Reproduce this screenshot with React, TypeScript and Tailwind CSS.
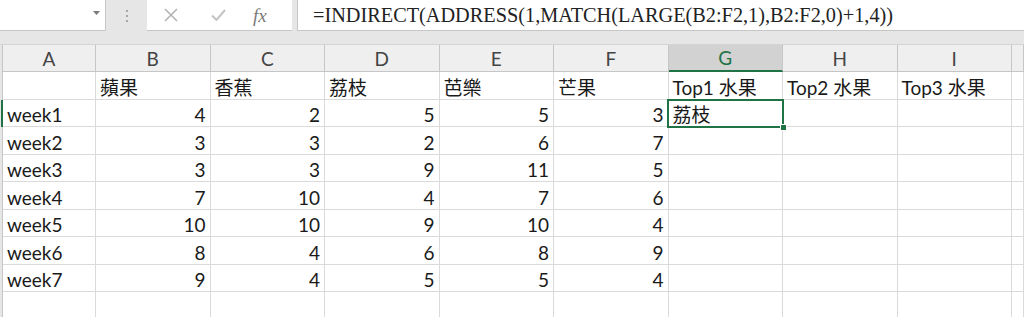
import React from 'react'

// ─── data ────────────────────────────────────────────────────────────
const COLS = ['A', 'B', 'C', 'D', 'E', 'F', 'G', 'H', 'I', '']
const FRUITS = ['蘋果', '香蕉', '荔枝', '芭樂', '芒果']
const ROWS: [string, number[]][] = [
  ['week1', [4, 2, 5, 5, 3]],
  ['week2', [3, 3, 2, 6, 7]],
  ['week3', [3, 3, 9, 11, 5]],
  ['week4', [7, 10, 4, 7, 6]],
  ['week5', [10, 10, 9, 10, 4]],
  ['week6', [8, 4, 6, 8, 9]],
  ['week7', [9, 4, 5, 5, 4]],
]

const GRID = 'grid grid-cols-[93px_repeat(8,114.5px)_1fr]'
const CELL = 'border-r border-b border-[#dadada] flex items-end px-[4px] pb-[2px] overflow-hidden whitespace-nowrap'

function Toolbar() {
  return (
    <div className="h-[44px] bg-[#e6e6e6] flex items-start">
      {/* name box */}
      <div className="w-[106px] h-[31px] bg-white border-r border-b border-[#c6c6c6] relative">
        <svg className="absolute left-[93px] top-[11px]" width="7" height="4" viewBox="0 0 7 4">
          <path d="M0 0h7L3.5 4z" fill="#7a7a7a" />
        </svg>
      </div>
      {/* grip dots */}
      <div className="w-[41px] h-[31px] flex flex-col items-center justify-center gap-[3px]">
        <span className="w-[2px] h-[2px] bg-[#a8a8a8]" />
        <span className="w-[2px] h-[2px] bg-[#a8a8a8]" />
        <span className="w-[2px] h-[2px] bg-[#a8a8a8]" />
      </div>
      {/* cancel / enter / fx */}
      <div className="w-[145px] h-[31px] bg-white border-b border-[#c6c6c6] flex items-center">
        <svg className="ml-[17px]" width="14" height="14" viewBox="0 0 14 14">
          <path d="M1 1l12 12M13 1L1 13" stroke="#b4b4b4" strokeWidth="1.6" />
        </svg>
        <svg className="ml-[33px]" width="15" height="12" viewBox="0 0 15 12">
          <path d="M1 6.5l4.5 4.5L14 1" fill="none" stroke="#c4c4c4" strokeWidth="2" />
        </svg>
        <span className="ml-[27px] text-[19px] italic text-[#7a7a7a] leading-none" style={{ fontFamily: '"Liberation Serif", serif' }}>
          fx
        </span>
      </div>
      {/* formula */}
      <div className="ml-[5px] flex-1 h-[31px] bg-white border-b border-l border-[#c6c6c6] flex items-center pl-[15px]">
        <span className="text-[20.3px] text-[#222] leading-none" style={{ fontFamily: '"Liberation Serif", serif' }}>
          =INDIRECT(ADDRESS(1,MATCH(LARGE(B2:F2,1),B2:F2,0)+1,4))
        </span>
      </div>
    </div>
  )
}

function HeaderRow() {
  return (
    <div className="flex h-[28px] border-t border-[#d4d4d4]">
      <div className="w-[3px] bg-[#e6e6e6] border-r border-[#c6c6c6]" />
      <div className={`${GRID} flex-1`}>
        {COLS.map((c, i) => (
          <div
            key={i}
            className={
              c === 'G'
                ? 'bg-[#d2d2d2] border-r border-[#c6c6c6] border-b-2 border-b-[#217346] flex items-center justify-center text-[19px] text-[#217346]'
                : 'bg-[#efefef] border-r border-b border-[#c6c6c6] flex items-center justify-center text-[19px] text-[#444]'
            }
          >
            {c}
          </div>
        ))}
      </div>
    </div>
  )
}

function Row({ cells, active }: { cells: (string | number)[]; active?: boolean }) {
  return (
    <div className="flex h-[27.5px]">
      <div className={`w-[3px] bg-[#e6e6e6] ${active ? 'border-r-2 border-[#217346]' : 'border-r border-[#c6c6c6]'}`} />
      <div className={`${GRID} flex-1`}>
        {COLS.map((_, i) => {
          const v = cells[i]
          const num = typeof v === 'number'
          return (
            <div key={i} className={`${CELL} ${num ? 'justify-end' : ''}`}>
              {v}
            </div>
          )
        })}
      </div>
    </div>
  )
}

export default function App() {
  return (
    <div
      className="w-[1024px] h-[317px] overflow-hidden bg-white text-[#1a1a1a] text-[19px] leading-none"
      style={{ fontFamily: 'Lato, "Noto Sans CJK TC", sans-serif' }}
    >
      <Toolbar />
      <HeaderRow />
      <Row cells={['', ...FRUITS, 'Top1 水果', 'Top2 水果', 'Top3 水果']} />
      <div className="relative">
        <Row cells={[ROWS[0][0], ...ROWS[0][1], '荔枝']} active />
        {/* selected cell G2 */}
        <div className="absolute left-[667px] top-[-1px] w-[116.5px] h-[29px] border-2 border-[#217346] pointer-events-none">
          <span className="absolute right-[-5px] bottom-[-5px] w-[7px] h-[7px] bg-[#217346] border border-white" />
        </div>
      </div>
      {ROWS.slice(1).map(([w, nums]) => (
        <Row key={w} cells={[w, ...nums]} />
      ))}
      <Row cells={[]} />
    </div>
  )
}
